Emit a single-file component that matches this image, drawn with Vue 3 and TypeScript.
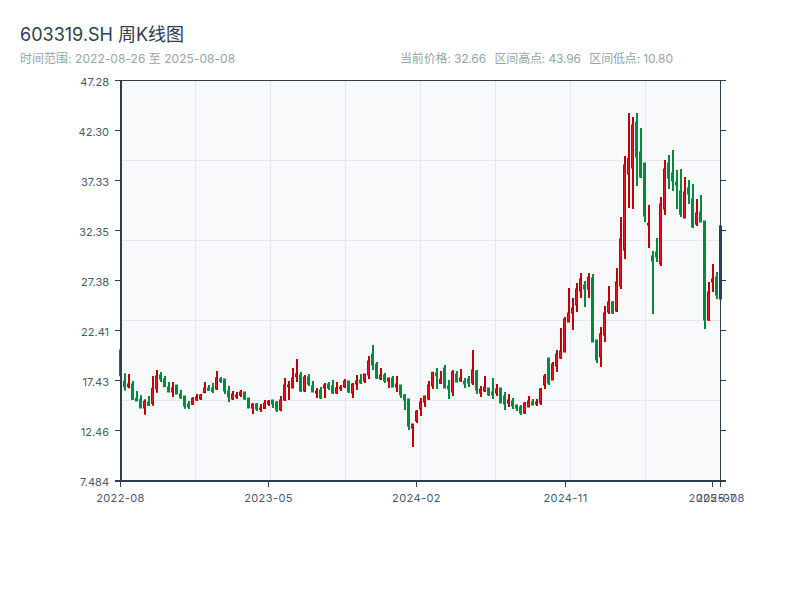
<script setup lang="ts">
type Row = [number, number, number, number, 'r' | 'g']
interface Segment { y0: number; rows: Row[] }

// Each row: wick top, wick bottom, body top, body bottom (thirds of a pixel from y0), colour.
const segments: Segment[] = [
  { y0: 340, rows: [
    [30,107,30,107,'g'],[100,152,123,140,'g'],[102,145,132,140,'r'],[123,180,132,178,'g'],[153,183,175,183,'g'],
    [166,204,178,204,'g'],[178,224,184,204,'r'],[168,197,186,196,'g'],[108,197,145,190,'r'],[90,158,108,146,'r'],
    [96,126,105,117,'g'],[108,141,117,140,'g'],[126,156,141,156,'g'],[126,171,144,156,'r'],[135,162,135,162,'g'],
    [150,176,162,174,'g'],[168,206,168,198,'g'],[183,207,192,201,'g'],[172,195,175,193,'r'],[162,183,171,180,'r'],
    [162,180,165,177,'r'],[126,159,144,158,'r'],[135,153,144,151,'g'],[129,159,144,154,'g'],[93,150,114,147,'r'],
    [111,129,117,124,'g'],[117,162,117,153,'g'],[138,186,153,171,'g'],[153,180,162,177,'r'],[156,177,165,171,'r'],
    [150,171,156,166,'r'],[156,180,156,177,'g'],[174,204,174,204,'g'],[190,222,192,204,'r'],[189,213,192,207,'g'],
    [192,216,204,208,'r'],[180,207,189,205,'r'],[180,198,183,192,'r'],
    [180,204,180,192,'g'],[183,216,186,210,'g'],[168,214,180,210,'r'],[114,183,135,180,'r'],[123,180,135,140,'r'],
    [84,144,114,144,'r'],[57,126,102,110,'r'],[96,156,105,153,'g'],[105,156,111,153,'r'],[102,138,111,132,'g'],
    [123,156,138,156,'g'],[144,174,153,159,'r'],[141,177,150,174,'g'],[129,174,135,144,'r'],[126,150,132,144,'g'],
    [120,162,138,159,'g'],[126,162,144,159,'r'],[135,153,141,146,'r'],[117,144,123,141,'r'],[123,159,123,156,'g'],
    [129,174,132,159,'r'],[105,150,123,132,'r'],[102,132,120,129,'g'],[102,129,102,123,'r'],[48,117,63,105,'r'],
    [15,90,42,75,'g'],[66,117,72,114,'g'],[84,120,105,117,'r'],[99,129,105,123,'g'],[114,144,114,123,'r'],
    [108,141,114,141,'g'],[108,156,132,141,'r'],[135,174,135,165,'g'],[162,210,165,180,'g'],[177,270,177,258,'g'],
    [252,321,252,264,'r'],[210,249,213,243,'r'],[174,228,186,207,'r'],[168,201,168,186,'r'],[123,180,135,177,'r'],
  ] },
  { y0: 330, rows: [
    [126,177,127,167,'r'],[114,177,129,137,'g'],[123,162,148,160,'r'],[105,174,114,174,'g'],[150,207,168,177,'g'],
    [120,198,126,186,'r'],[123,156,132,156,'g'],[117,156,144,153,'r'],[144,174,153,162,'g'],[138,171,147,159,'g'],
    [60,165,120,159,'r'],[120,192,123,180,'g'],[168,201,177,189,'r'],[138,186,171,183,'r'],[174,198,174,195,'g'],
    [144,207,186,195,'g'],[162,198,177,189,'r'],[174,219,174,219,'g'],[186,240,198,222,'g'],[192,231,210,219,'r'],
    [204,237,213,228,'g'],[225,243,225,234,'g'],[225,255,231,249,'g'],[216,252,219,249,'r'],[198,231,213,231,'r'],
    [207,225,216,225,'g'],[207,228,216,222,'r'],[174,225,177,219,'r'],[132,177,138,165,'r'],[84,165,84,159,'g'],
  ] },
  { y0: 220, rows: [
    [426,480,432,480,'r'],[390,456,402,438,'r'],[324,417,393,414,'r'],[291,396,297,396,'r'],[204,306,279,306,'r'],
    [234,330,264,279,'r'],[189,276,207,255,'r'],[159,234,177,213,'r'],[183,261,195,207,'g'],[159,234,171,207,'r'],
    [162,366,174,366,'g'],[360,429,360,420,'g'],[321,441,342,411,'r'],[258,366,279,345,'r'],[198,282,246,276,'r'],
    [243,282,246,279,'g'],[144,276,186,273,'r'],[-9,207,57,198,'r'],[-192,117,-165,90,'r'],
  ] },
  { y0: 100, rows: [
    [39,324,175,222,'r'],[51,327,75,204,'r'],[39,258,66,171,'g'],[84,234,156,231,'g'],[189,366,189,348,'g'],
  ] },
  { y0: 190, rows: [
    [45,174,100,105,'r'],[183,372,198,213,'g'],[144,216,186,201,'g'],[21,228,42,222,'r'],
  ] },
  { y0: 100, rows: [
    [180,345,207,327,'r'],[165,267,189,234,'g'],[150,273,219,243,'g'],[210,327,246,255,'g'],[207,351,273,342,'g'],
    [231,354,276,354,'r'],[240,312,264,282,'g'],[252,384,297,381,'g'],[297,378,339,372,'r'],[285,366,336,366,'g'],
  ] },
  { y0: 200, rows: [
    [63,387,63,360,'g'],[246,363,276,360,'r'],[192,276,237,246,'r'],[216,297,231,285,'g'],[78,297,78,297,'r'],
  ] },
]

interface Candle { key: number; x: number; wickTop: number; wickBottom: number; bodyTop: number; bodyHeight: number; up: boolean }

const candles: Candle[] = segments
  .flatMap((s) => s.rows.map((r) => ({ y0: s.y0, r })))
  .map(({ y0, r }, i) => ({
    key: i,
    x: 121 + i * 4,
    wickTop: y0 + r[0] / 3,
    wickBottom: y0 + r[1] / 3,
    bodyTop: y0 + r[2] / 3,
    bodyHeight: (r[3] - r[2]) / 3,
    up: r[4] === 'r',
  }))

const yLabels = ['47.28', '42.30', '37.33', '32.35', '27.38', '22.41', '17.43', '12.46', '7.484']
  .map((text, i) => ({ text, y: 80.5 + i * 50 }))
const xLabels = [
  { text: '2022-08', x: 120.5 },
  { text: '2023-05', x: 268.5 },
  { text: '2024-02', x: 416.5 },
  { text: '2024-11', x: 565.5 },
  { text: '2025-07', x: 712.5 },
  { text: '2025-08', x: 720.5 },
]
const vGrid = [195.5, 270.5, 345.5, 420.5, 495.5, 570.5, 645.5]
const hGrid = [160.5, 240.5, 320.5, 400.5]
</script>

<template>
  <div class="page">
    <header class="header">
      <h1 class="title">603319.SH 周K线图</h1>
      <div class="meta">
        <div class="range">时间范围: 2022-08-26 至 2025-08-08</div>
        <div class="stats">
          <span>当前价格: 32.66</span>
          <span>区间高点: 43.96</span>
          <span>区间低点: 10.80</span>
        </div>
      </div>
    </header>
    <svg class="chart" viewBox="0 70 800 530" width="800" height="530">
      <rect class="plot" x="120.5" y="80.5" width="600" height="400" />
      <line v-for="x in vGrid" :key="'v' + x" class="grid" :x1="x" :x2="x" y1="80.5" y2="480.5" />
      <line v-for="y in hGrid" :key="'h' + y" class="grid" x1="120.5" x2="720.5" :y1="y" :y2="y" />

      <g v-for="c in candles" :key="c.key" :class="c.up ? 'up' : 'down'">
        <line class="wick" :x1="c.x" :x2="c.x" :y1="c.wickTop" :y2="c.wickBottom" />
        <rect class="body" :x="c.x - 1.5" :y="c.bodyTop" width="2" :height="c.bodyHeight" />
      </g>

      <line class="axis thick" x1="121" x2="121" y1="80" y2="482" />
      <line class="axis thick" x1="115" x2="726" y1="481" y2="481" />
      <line class="axis" x1="115" x2="726" y1="80.5" y2="80.5" />
      <line class="axis" x1="720.5" x2="720.5" y1="80" y2="487" />

      <g v-for="l in yLabels" :key="l.text">
        <line class="axis" x1="115" x2="120" :y1="l.y" :y2="l.y" />
        <line class="axis" x1="721" x2="726" :y1="l.y" :y2="l.y" />
        <text class="label" x="109" :y="l.y + 5" text-anchor="end">{{ l.text }}</text>
      </g>
      <g v-for="l in xLabels" :key="l.text">
        <line class="axis" :x1="l.x" :x2="l.x" y1="482" y2="487" />
        <text class="label wide" :x="l.x" y="502" text-anchor="middle">{{ l.text }}</text>
      </g>
    </svg>
  </div>
</template>

<style scoped>
.page {
  width: 800px;
  height: 600px;
  background: #ffffff;
  overflow: hidden;
  font-family: Inter, "Noto Sans CJK SC", sans-serif;
}
.header {
  height: 70px;
  padding: 24px 20px 0;
  box-sizing: border-box;
}
.title {
  margin: 0;
  font-size: 18px;
  line-height: 22px;
  font-weight: 400;
  color: #2c3e50;
}
.meta {
  display: grid;
  grid-template-columns: 380px 1fr;
  margin-top: 5px;
  font-size: 12px;
  line-height: 16px;
  color: #95a5a6;
}
.range {
  letter-spacing: 0.04px;
}
.stats {
  display: flex;
  gap: 8.5px;
  letter-spacing: -0.15px;
}
.chart {
  display: block;
}
.plot {
  fill: #f8f9fa;
}
.grid {
  stroke: #e4e7ec;
  stroke-width: 1;
}
.up .wick {
  stroke: #c00000;
}
.up .body {
  fill: #f01020;
  stroke: #c00000;
  stroke-width: 1;
}
.down .wick {
  stroke: #008a3e;
}
.down .body {
  fill: #008a3e;
  stroke: #008a3e;
  stroke-width: 1;
}
.wick {
  stroke-width: 2;
}
.axis {
  stroke: #2c3e50;
  stroke-width: 1;
}
.axis.thick {
  stroke-width: 2;
}
.label {
  font-size: 11px;
  fill: #4a5a68;
}
.label.wide {
  letter-spacing: 0.4px;
}
</style>
